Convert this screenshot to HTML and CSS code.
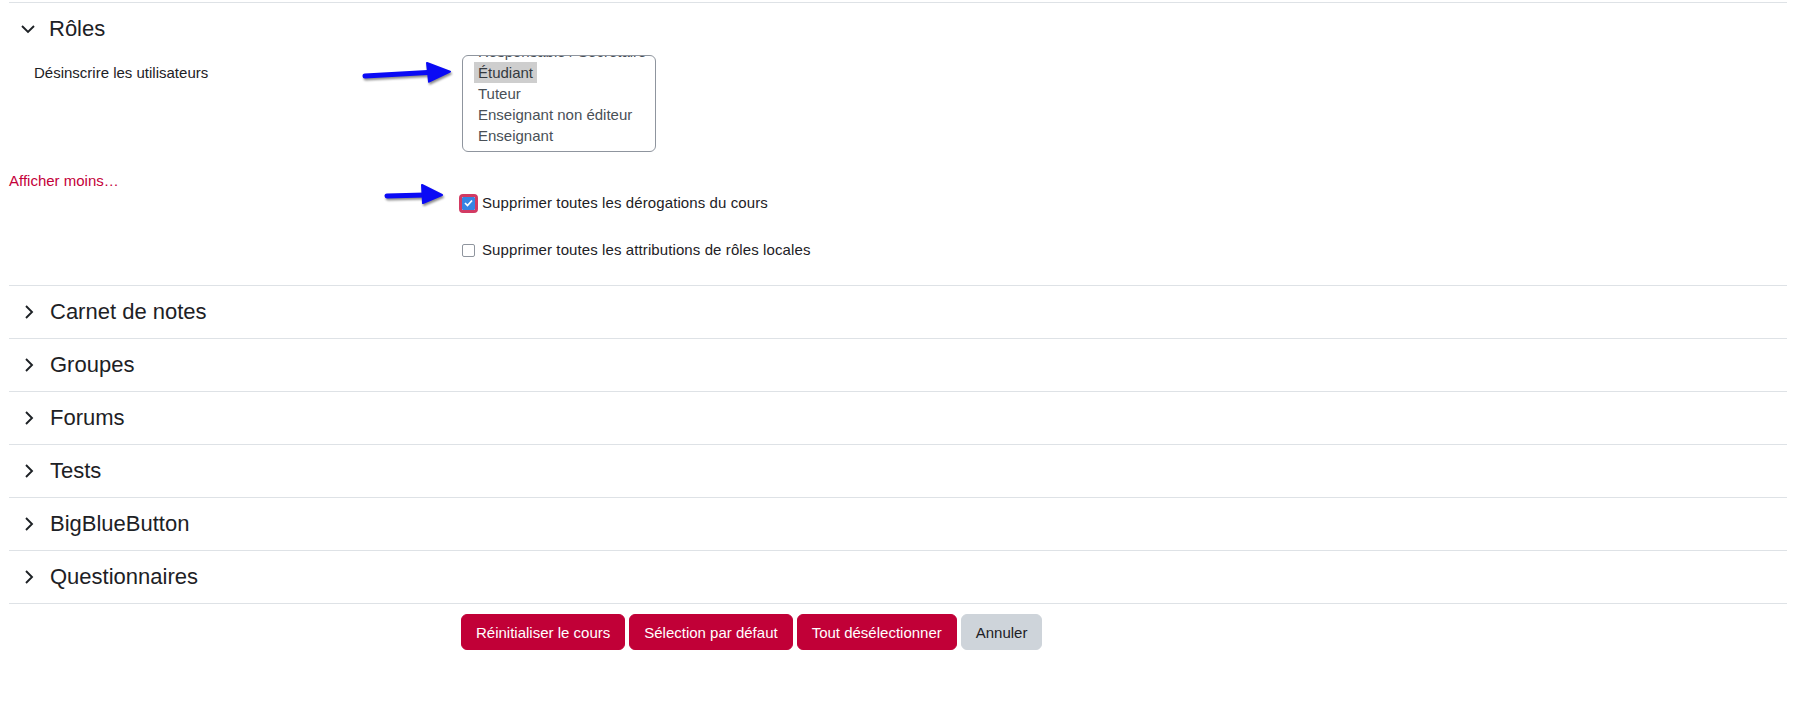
FILE: index.html
```html
<!DOCTYPE html>
<html lang="fr">
<head>
    <meta charset="UTF-8">
    <title>Réinitialiser le cours</title>
    <link rel="stylesheet" href="styles.css">
</head>
<body>
    <div class="page">
        <!-- Section ouverte : Rôles -->
        <div class="section">
            <div class="sec-head">
                <span class="chev chev-open">
                    <svg width="14" height="9" viewBox="0 0 14 9"><polyline points="1,1 7,7 13,1" fill="none" stroke="#1d2125" stroke-width="1.9"/></svg>
                </span>
                <h3>Rôles</h3>
            </div>

            <div class="fitem fitem-select">
                <label class="flabel">Désinscrire les utilisateurs</label>
                <div class="listbox">
                    <div class="listbox-inner">
                        <div class="opt">Responsable / Secrétaire</div>
                        <div class="opt selected">Étudiant</div>
                        <div class="opt">Tuteur</div>
                        <div class="opt">Enseignant non éditeur</div>
                        <div class="opt">Enseignant</div>
                    </div>
                </div>
            </div>

            <a href="#" class="more-link">Afficher moins…</a>

            <div class="fitem fitem-check">
                <div></div>
                <label class="check-line">
                    <span class="check checked focused">
                        <svg width="9" height="8" viewBox="0 0 9 8"><polyline points="1,4 3.5,6.5 8,1.5" fill="none" stroke="#fff" stroke-width="1.7"/></svg>
                    </span>
                    Supprimer toutes les dérogations du cours
                </label>
            </div>

            <div class="fitem fitem-check last">
                <div></div>
                <label class="check-line">
                    <span class="check"></span>
                    Supprimer toutes les attributions de rôles locales
                </label>
            </div>
        </div>

        <!-- Sections repliées -->
        <div class="section">
            <div class="sec-head">
                <span class="chev"><svg width="9" height="14" viewBox="0 0 9 14"><polyline points="1,1 7,7 1,13" fill="none" stroke="#1d2125" stroke-width="1.9"/></svg></span>
                <h3>Carnet de notes</h3>
            </div>
        </div>
        <div class="section">
            <div class="sec-head">
                <span class="chev"><svg width="9" height="14" viewBox="0 0 9 14"><polyline points="1,1 7,7 1,13" fill="none" stroke="#1d2125" stroke-width="1.9"/></svg></span>
                <h3>Groupes</h3>
            </div>
        </div>
        <div class="section">
            <div class="sec-head">
                <span class="chev"><svg width="9" height="14" viewBox="0 0 9 14"><polyline points="1,1 7,7 1,13" fill="none" stroke="#1d2125" stroke-width="1.9"/></svg></span>
                <h3>Forums</h3>
            </div>
        </div>
        <div class="section">
            <div class="sec-head">
                <span class="chev"><svg width="9" height="14" viewBox="0 0 9 14"><polyline points="1,1 7,7 1,13" fill="none" stroke="#1d2125" stroke-width="1.9"/></svg></span>
                <h3>Tests</h3>
            </div>
        </div>
        <div class="section">
            <div class="sec-head">
                <span class="chev"><svg width="9" height="14" viewBox="0 0 9 14"><polyline points="1,1 7,7 1,13" fill="none" stroke="#1d2125" stroke-width="1.9"/></svg></span>
                <h3>BigBlueButton</h3>
            </div>
        </div>
        <div class="section section-last">
            <div class="sec-head">
                <span class="chev"><svg width="9" height="14" viewBox="0 0 9 14"><polyline points="1,1 7,7 1,13" fill="none" stroke="#1d2125" stroke-width="1.9"/></svg></span>
                <h3>Questionnaires</h3>
            </div>
        </div>

        <div class="buttons">
            <button class="btn btn-primary">Réinitialiser le cours</button>
            <button class="btn btn-primary">Sélection par défaut</button>
            <button class="btn btn-primary">Tout désélectionner</button>
            <button class="btn btn-secondary">Annuler</button>
        </div>

        <!-- Flèches d'annotation par-dessus la capture -->
        <svg class="arrow arrow-1" width="95" height="30" viewBox="0 0 95 30">
            <line x1="5" y1="18" x2="72" y2="14.2" stroke="#0a0af5" stroke-width="5" stroke-linecap="round"/>
            <polygon points="67,5 90,13.7 69,23.7" fill="#0a0af5" stroke="#0a0af5" stroke-width="2" stroke-linejoin="round"/>
        </svg>
        <svg class="arrow arrow-2" width="65" height="28" viewBox="0 0 65 28">
            <line x1="5" y1="16" x2="43" y2="15" stroke="#0a0af5" stroke-width="5" stroke-linecap="round"/>
            <polygon points="40,5 60,15 41,23" fill="#0a0af5" stroke="#0a0af5" stroke-width="2" stroke-linejoin="round"/>
        </svg>
    </div>
</body>
</html>
```

FILE: styles.css
```css
* {
    margin: 0;
    padding: 0;
    box-sizing: border-box;
}

body {
    background: #fff;
    font-family: 'Liberation Sans', Arial, sans-serif;
    font-size: 15px;
    color: #1d2125;
}

.page {
    position: relative;
    width: 1778px;
    margin-left: 9px;
    padding-top: 2px;
    height: 712px;
}

.section {
    border-top: 1px solid #dee2e6;
}

.section-last {
    border-bottom: 1px solid #dee2e6;
}

.sec-head {
    height: 52px;
    display: flex;
    align-items: center;
}

.sec-head h3 {
    font-size: 22px;
    font-weight: normal;
    color: #1d2125;
}

.chev {
    display: flex;
    align-items: center;
    width: 25px;
    margin-left: 16px;
}

.chev-open {
    width: 28px;
    margin-left: 12px;
}

.fitem {
    display: grid;
    grid-template-columns: 453px 1fr;
}

.flabel {
    padding-left: 25px;
    padding-top: 7px;
    line-height: 22px;
}

.fitem-select {
    margin-bottom: 18px;
}

.listbox {
    width: 194px;
    height: 97px;
    border: 1px solid #8f959e;
    border-radius: 6px;
    overflow: hidden;
}

.listbox-inner {
    margin-top: -15px;
    padding-left: 11px;
}

.opt {
    width: fit-content;
    height: 21px;
    line-height: 21px;
    padding: 0 4px;
    color: #495057;
    white-space: nowrap;
}

.opt.selected {
    background-color: #cecece;
    color: #343a40;
}

.more-link {
    display: block;
    width: fit-content;
    line-height: 22px;
    color: #c4003a;
    text-decoration: none;
}

.fitem-check {
    height: 22px;
    margin-bottom: 25px;
}

.fitem-check.last {
    margin-bottom: 24px;
}

.check-line {
    display: flex;
    align-items: center;
    gap: 7px;
    line-height: 22px;
    letter-spacing: 0.1px;
}

.check {
    display: flex;
    align-items: center;
    justify-content: center;
    width: 13px;
    height: 13px;
    border: 1.5px solid #8f959e;
    border-radius: 2px;
    background: #fff;
}

.check.checked {
    background-color: #3584e4;
    border-color: #3584e4;
}

.check.focused {
    outline: 3px solid #d23a63;
    outline-offset: 0;
    border-radius: 1px;
}

.buttons {
    display: flex;
    gap: 4px;
    margin-top: 10px;
    margin-left: 452px;
}

.btn {
    height: 36px;
    padding: 0 14px;
    border: 1px solid transparent;
    border-radius: 6px;
    font-family: inherit;
    font-size: 15px;
    cursor: pointer;
}

.btn-primary {
    background-color: #c10037;
    border-color: #c10037;
    color: #fff;
}

.btn-secondary {
    background-color: #ced4da;
    border-color: #ced4da;
    color: #1d2125;
}

.arrow {
    position: absolute;
    filter: drop-shadow(1px 2px 1px rgba(0, 0, 0, 0.45));
}

.arrow-1 {
    left: 351px;
    top: 58px;
}

.arrow-2 {
    left: 373px;
    top: 180px;
}
```
